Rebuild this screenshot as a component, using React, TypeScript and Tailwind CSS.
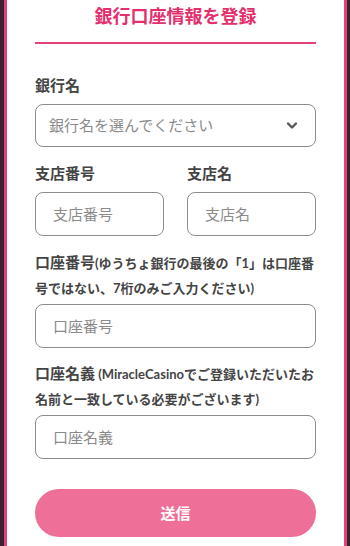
import React from 'react';

const FONT = { fontFamily: 'Lato, "Noto Sans CJK JP", "Noto Sans", sans-serif' };

function Field({ placeholder, className = '' }: { placeholder: string; className?: string }) {
  return (
    <input
      type="text"
      placeholder={placeholder}
      className={
        'h-[44px] w-full rounded-lg border border-[#8c8c8c] bg-white px-[17px] text-[15px] text-[#333] outline-none placeholder:text-[#8a8a8a] ' +
        className
      }
    />
  );
}

export default function App() {
  return (
    <div className="flex h-[546px] w-[350px] bg-[#3b2230] pl-[4px] pr-[3px]" style={FONT}>
      <div className="flex-1 border-x-[3px] border-[#e2427c] bg-white px-7 pt-[4px]">
        <h1 className="text-center text-[18px] font-bold leading-[24px] text-[#e3306d]">
          銀行口座情報を登録
        </h1>
        <div className="mt-[14px] h-[2px] bg-[#e2427c]" />

        <div className="mt-[30px]">
          <label className="block text-[15px] font-bold leading-[22px] text-[#444]">銀行名</label>
          <div className="relative mt-[8px] flex h-[43px] items-center rounded-lg border border-[#8c8c8c] px-[13px]">
            <span className="text-[15px] text-[#8a8a8a]">銀行名を選んでください</span>
            <svg
              className="absolute right-[17px] top-[16px]"
              width="12"
              height="9"
              viewBox="0 0 12 9"
              fill="none"
              stroke="#555"
              strokeWidth="2.4"
              strokeLinecap="round"
              strokeLinejoin="round"
            >
              <path d="M2 2.5 6 6.5 10 2.5" />
            </svg>
          </div>
        </div>

        <div className="mt-[15px] grid grid-cols-2 gap-[23px]">
          <div>
            <label className="block text-[15px] font-bold leading-[22px] text-[#444]">支店番号</label>
            <Field placeholder="支店番号" className="mt-[8px]" />
          </div>
          <div>
            <label className="block text-[15px] font-bold leading-[22px] text-[#444]">支店名</label>
            <Field placeholder="支店名" className="mt-[8px]" />
          </div>
        </div>

        <div className="mt-[14px]">
          <label className="block text-[13px] font-bold leading-[25px] text-[#444]">
            <span className="text-[15px]">口座番号</span>(ゆうちょ銀行の最後の「1」は口座番号ではない、7桁のみご入力ください)
          </label>
          <Field placeholder="口座番号" className="mt-[3px]" />
        </div>

        <div className="mt-[13px]">
          <label className="block text-[13px] font-bold leading-[25px] text-[#444]">
            <span className="text-[15px]">口座名義</span> (MiracleCasinoでご登録いただいたお名前と一致している必要がございます)
          </label>
          <Field placeholder="口座名義" className="mt-[3px]" />
        </div>

        <button className="mt-[30px] h-[48px] w-full rounded-full bg-[#ee7098] text-[15px] font-bold text-white">
          送信
        </button>
      </div>
    </div>
  );
}
